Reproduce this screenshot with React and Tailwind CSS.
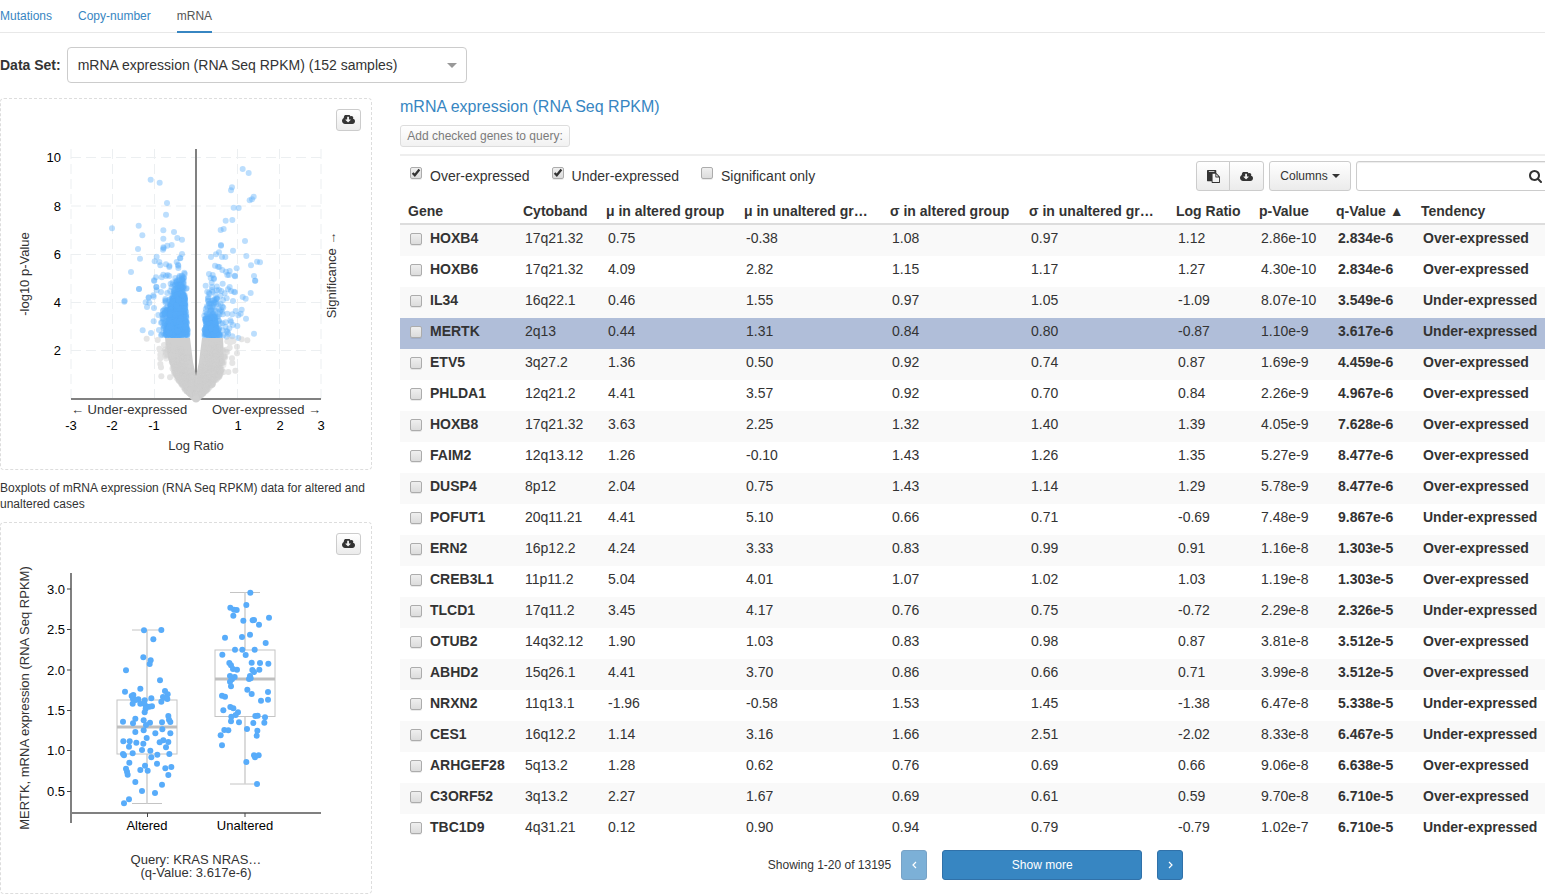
import React from "react";

const ALTERED = [
  [132, 61], [184, 60], [160, 88], [130, 142], [152, 151], [149, 162], [78, 181], [180, 211], [121, 236],
  [75, 245], [195, 243], [100, 255], [95, 258], [203, 253], [189, 261], [197, 263], [202, 267], [99, 267],
  [115, 268], [107, 270], [154, 265], [134, 271], [184, 275], [98, 281], [121, 281], [133, 281], [138, 289],
  [148, 290], [156, 289], [137, 296], [134, 307], [205, 318], [106, 326], [207, 329], [211, 336], [131, 331],
  [150, 338], [69, 335], [99, 340], [186, 337], [138, 345], [187, 358], [106, 366], [131, 361], [166, 370],
  [211, 370], [140, 384], [70, 394], [89, 394], [109, 398], [190, 391], [179, 397], [205, 396], [130, 401],
  [87, 410], [198, 412], [126, 420], [151, 422], [98, 430], [69, 432], [72, 436], [172, 434], [208, 432],
  [154, 442], [88, 458], [171, 461], [135, 467], [78, 476], [196, 475], [214, 471], [121, 480], [143, 482],
  [81, 485], [83, 494], [205, 495], [106, 516], [186, 524], [126, 543], [165, 549], [87, 568], [72, 580],
].map(([x, y]) => [100 + x / 3, 610 + y / 3]);

const UNALTERED = [
  [151, 68], [139, 105], [91, 113], [102, 119], [110, 120], [100, 137], [207, 143], [130, 152], [158, 151],
  [162, 150], [177, 164], [150, 194], [75, 203], [126, 201], [197, 219], [105, 239], [127, 239], [164, 239],
  [67, 254], [137, 255], [88, 279], [93, 286], [155, 278], [180, 279], [205, 281], [99, 297], [111, 299],
  [157, 300], [178, 299], [162, 306], [90, 318], [104, 321], [150, 318], [96, 328], [147, 327], [152, 325],
  [90, 335], [93, 349], [142, 359], [155, 372], [204, 366], [66, 377], [75, 380], [183, 392], [204, 389],
  [91, 411], [100, 415], [70, 421], [114, 427], [107, 435], [94, 440], [166, 438], [173, 437], [195, 442],
  [93, 454], [117, 457], [160, 459], [193, 458], [141, 477], [73, 480], [85, 481], [172, 482], [62, 496],
  [170, 497], [66, 526], [162, 556], [176, 556], [165, 562], [139, 576], [171, 642],
].map(([x, y]) => [200 + x / 3, 570 + y / 3]);

const SIGNIFICANT = [
  ...[
    [452, 119], [479, 128], [501, 189], [498, 224], [336, 265], [416, 257], [427, 286], [490, 271], [522, 276],
    [490, 296], [532, 294], [546, 299], [502, 317], [515, 315], [414, 327], [490, 322], [491, 325], [489, 329],
    [420, 356], [546, 342], [540, 354], [541, 355], [470, 350], [464, 364], [478, 366], [481, 376], [498, 373],
    [530, 366], [508, 377], [508, 381], [534, 374], [535, 377], [535, 384], [393, 396], [553, 398], [554, 402],
    [490, 404], [498, 408], [503, 405], [508, 408], [468, 412], [485, 412], [526, 414], [545, 407], [462, 421],
    [417, 447], [469, 441], [470, 451], [490, 437], [512, 431], [446, 472], [461, 470], [558, 446], [374, 482],
  ].map(([x, y]) => [x / 3, 140 + y / 3]),
  ...[
    [237, 27], [193, 65], [248, 151], [273, 159], [266, 53], [257, 67], [268, 68], [261, 81], [280, 46],
    [282, 84], [281, 124], [295, 105], [297, 150], [289, 21], [303, 36], [283, 3], [380, 25], [303, 128],
  ].map(([x, y]) => [60 + x / 3, 280 + y / 3]),
  ...[
    [158, 87], [176, 99], [126, 142], [123, 151], [191, 170], [186, 178], [179, 181], [131, 203], [146, 204],
    [107, 242], [127, 240], [92, 270], [101, 267], [165, 303], [93, 315], [93, 317], [129, 332], [87, 337],
    [78, 343], [63, 351], [96, 351], [106, 351], [169, 348], [201, 365], [210, 367], [183, 376], [140, 385],
    [75, 377], [84, 380], [88, 381], [97, 390], [108, 395], [119, 393], [112, 405], [117, 405], [134, 407],
    [135, 409], [57, 402], [68, 405], [62, 414], [71, 415], [72, 417], [192, 408], [196, 422], [47, 437],
    [65, 428], [66, 441], [98, 431], [66, 450], [68, 455], [57, 458], [80, 451], [94, 453], [104, 460],
    [119, 441], [114, 448], [123, 453], [132, 455], [135, 457], [182, 459], [158, 471], [167, 476], [81, 474],
  ].map(([x, y]) => [190 + x / 3, 140 + y / 3]),
  ...[
    [195, 2], [99, 60], [110, 55], [129, 63], [81, 58], [67, 62], [84, 72], [68, 85], [59, 93], [155, 89],
    [137, 93], [145, 106], [152, 101], [168, 116], [112, 101], [127, 103], [98, 103], [88, 104], [121, 121],
    [123, 126], [142, 138], [129, 135], [192, 161], [110, 153], [145, 174], [127, 169], [110, 170], [43, 107],
    [57, 71], [75, 90], [107, 127], [118, 145],
  ].map(([x, y]) => [190 + x / 3, 280 + y / 3]),
];

const INSIGNIFICANT = [
  ...[
    [260, 176], [293, 180], [300, 210], [301, 224], [298, 206], [301, 252], [303, 262], [304, 289],
    [301, 235], [330, 292], [312, 195], [308, 214],
  ].map(([x, y]) => [60 + x / 3, 280 + y / 3]),
  ...[
    [172, 181], [155, 178], [141, 200], [141, 220], [126, 235], [127, 249], [136, 272], [115, 276], [101, 276],
    [126, 180], [120, 188], [109, 209], [117, 180], [130, 184], [112, 184], [119, 203],
  ].map(([x, y]) => [190 + x / 3, 280 + y / 3]),
];

function makeRandom(seed) {
  let state = seed;
  return () => {
    state = (state * 1664525 + 1013904223) % 4294967296;
    return state / 4294967296;
  };
}

// Bands are [y, outerX, innerX]; points are spread evenly between neighbouring bands.
function cloud(bands, count, seed) {
  const random = makeRandom(seed);
  const points = [];
  const top = bands[0][0];
  const bottom = bands[bands.length - 1][0];
  for (let i = 0; i < count; i++) {
    const y = top + Math.sqrt(random()) * (bottom - top);
    let k = 0;
    while (k < bands.length - 2 && bands[k + 1][0] < y) k++;
    const [y0, a0, b0] = bands[k];
    const [y1, a1, b1] = bands[k + 1];
    const t = (y - y0) / (y1 - y0);
    const a = a0 + (a1 - a0) * t;
    const b = b0 + (b1 - b0) * t;
    points.push([a + (b - a) * random(), y]);
  }
  return points;
}

const BLUE_CLOUD = [
  ...cloud([[272, 179, 184], [290, 168, 184], [310, 162, 186], [336, 161, 188]], 240, 7),
  ...cloud([[274, 178, 184], [290, 174, 184], [305, 170, 186], [336, 166, 188]], 620, 19),
  ...cloud([[284, 206, 222], [312, 205, 224], [336, 205, 230]], 80, 5),
  ...cloud([[308, 206, 212], [317, 205, 216], [325, 205, 216], [336, 204, 221]], 210, 31),
];

const GRAY_CLOUD = [
  ...cloud([[341, 163, 188], [358, 166, 189], [378, 176, 193], [390, 185, 196], [398, 194, 197]], 400, 11),
  ...cloud([[341, 230, 204], [358, 226, 203], [376, 220, 199], [388, 210, 196], [398, 198, 195]], 400, 23),
];

function Points({ points, className, r = 3 }) {
  return (
    <g className={className}>
      {points.map(([x, y], i) => (
        <circle key={i} cx={x} cy={y} r={r} />
      ))}
    </g>
  );
}

function CloudDownloadIcon() {
  return (
    <svg viewBox="0 128 1920 1280" className="h-[9px] w-[13px] fill-current" preserveAspectRatio="none" aria-hidden="true">
      <path d="M1280 800q0-14-9-23t-23-9h-224v-352q0-13-9.5-22.5t-22.5-9.5h-192q-13 0-22.5 9.5t-9.5 22.5v352h-224q-13 0-22.5 9.5t-9.5 22.5q0 14 9 23l352 352q9 9 23 9t23-9l351-351q10-12 10-24zm640 224q0 159-112.5 271.5t-271.5 112.5h-1088q-185 0-316.5-131.5t-131.5-316.5q0-130 70-240t188-165q-2-30-2-43 0-212 150-362t362-150q156 0 285.5 87t188.5 231q71-62 166-62 106 0 181 75t75 181q0 76-41 138 130 31 213.5 135.5t83.5 238.5z" />
    </svg>
  );
}

function ClipboardIcon() {
  return (
    <svg viewBox="0 0 1792 1792" className="size-[13px] fill-current" aria-hidden="true">
      <path d="M768 1664h896v-640h-416q-40 0-68-28t-28-68v-416h-384v1152zm256-1440v-64q0-13-9.5-22.5t-22.5-9.5h-704q-13 0-22.5 9.5t-9.5 22.5v64q0 13 9.5 22.5t22.5 9.5h704q13 0 22.5-9.5t9.5-22.5zm256 672h299l-299-299v299zm512 128v672q0 40-28 68t-68 28h-960q-40 0-68-28t-28-68v-160h-544q-40 0-68-28t-28-68v-1344q0-40 28-68t68-28h1088q40 0 68 28t28 68v328q21 13 36 28l408 408q28 28 48 76t20 88z" />
    </svg>
  );
}

function SearchIcon() {
  return (
    <svg viewBox="64 128 1664 1664" className="size-[13px] fill-current" aria-hidden="true">
      <path d="M1216 832q0-185-131.5-316.5t-316.5-131.5-316.5 131.5-131.5 316.5 131.5 316.5 316.5 131.5 316.5-131.5 131.5-316.5zm512 832q0 52-38 90t-90 38q-54 0-90-38l-343-342q-179 124-399 124-143 0-273.5-55.5t-225-150-150-225-55.5-273.5 55.5-273.5 150-225 225-150 273.5-55.5 273.5 55.5 225 150 150 225 55.5 273.5q0 220-124 399l343 343q37 37 37 90z" />
    </svg>
  );
}

function Chevron({ points }) {
  return (
    <svg viewBox="0 0 5 8" className="h-2 w-[5px] fill-none stroke-current" aria-hidden="true">
      <polyline points={points} strokeWidth="1.2" />
    </svg>
  );
}

function Checkbox({ id, label, defaultChecked }) {
  return (
    <span className="relative block size-3 shrink-0">
      <input
        id={id}
        type="checkbox"
        aria-label={label}
        defaultChecked={defaultChecked}
        className="peer block size-3 appearance-none rounded-[2px] border border-[#acacac] bg-linear-to-b from-[#efefef] to-[#dcdcdc] shadow-[0_1px_0_rgba(0,0,0,0.08)]"
      />
      <svg
        viewBox="0 0 12 12"
        className="pointer-events-none absolute inset-0 hidden size-3 fill-none stroke-[#333] peer-checked:block"
        aria-hidden="true"
      >
        <path d="M2.6 6 L4.8 8.2 L9.4 2.6" strokeWidth="2.3" />
      </svg>
    </span>
  );
}

function DownloadButton() {
  return (
    <button
      type="button"
      aria-label="Download"
      className="absolute top-2.5 right-2.5 flex h-[22px] w-[25px] items-center justify-center rounded-[3px] border border-[#ccc] bg-linear-to-b from-white to-[#ebebeb] pb-px text-[#333]"
    >
      <CloudDownloadIcon />
    </button>
  );
}

const SIDE_TEXT = "fill-[#333]";

function VolcanoPlot() {
  return (
    <svg viewBox="1 99 370 370" className="block w-full text-[13px]" role="img" aria-label="Volcano plot">
      <g className="fill-none stroke-[#eceff1]" strokeWidth="1" strokeDasharray="10 5">
        {[71, 112.5, 154.5, 237.5, 279.5, 321].map((x) => (
          <line key={x} x1={x} x2={x} y1="399" y2="149" />
        ))}
        {[157.5, 206, 254.5, 302.5, 350.5].map((y) => (
          <line key={y} x1="71" x2="321" y1={y} y2={y} />
        ))}
      </g>
      <g className="stroke-[#808080]" strokeWidth="2">
        <line x1="71" x2="321" y1="399" y2="399" />
        <line x1="196" x2="196" y1="149" y2="399" />
      </g>
      <Points points={SIGNIFICANT} className="fill-[#58acfa] [fill-opacity:0.4]" />
      <Points points={BLUE_CLOUD} className="fill-[#58acfa] [fill-opacity:0.4]" />
      <Points points={INSIGNIFICANT} className="fill-[#ccc] opacity-50" />
      <polygon
        className="fill-[#d0d0d0]"
        points="165,338 190,338 193,362 196,376 199,362 202,338 223,338 224,358 220,374 211,386 199,400 193,400 184,390 174,376 168,358"
      />
      <Points points={GRAY_CLOUD} className="fill-[#cfcfcf] [fill-opacity:0.4]" />
      <circle cx="196" cy="399" r="3.5" className="fill-[#d0d0d0]" />
      <g className="fill-black" textAnchor="end">
        <text x="61" y="162">10</text>
        <text x="61" y="211">8</text>
        <text x="61" y="259">6</text>
        <text x="61" y="307">4</text>
        <text x="61" y="355">2</text>
      </g>
      <g className="fill-black" textAnchor="middle">
        <text x="71" y="430">-3</text>
        <text x="112" y="430">-2</text>
        <text x="154" y="430">-1</text>
        <text x="238" y="430">1</text>
        <text x="280" y="430">2</text>
        <text x="321" y="430">3</text>
      </g>
      <g className={SIDE_TEXT}>
        <text x="71" y="414">← Under-expressed</text>
        <text x="321" y="414" textAnchor="end">Over-expressed →</text>
        <text x="196" y="450" textAnchor="middle">Log Ratio</text>
        <text transform="translate(29 274) rotate(-90)" textAnchor="middle">-log10 p-Value</text>
        <text transform="translate(336 275) rotate(-90)" textAnchor="middle">Significance →</text>
      </g>
    </svg>
  );
}

function Box({ x, top, q3, median, q1, bottom }) {
  return (
    <g className="fill-none stroke-[#c4c4c4]" strokeWidth="1">
      <path d={`M${x - 15} ${top}H${x + 15}M${x - 15} ${bottom}H${x + 15}`} />
      <path className="stroke-[#d2d2d2]" strokeWidth="1.6" d={`M${x} ${top}V${q3}M${x} ${q1}V${bottom}`} />
      <rect x={x - 30} y={q3} width="60" height={q1 - q3} />
      <path className="stroke-[#bfbfbf]" strokeWidth="3" d={`M${x - 30} ${median}H${x + 30}`} />
    </g>
  );
}

function BoxPlot() {
  return (
    <svg viewBox="1 523 370 370" className="block w-full text-[13px]" role="img" aria-label="MERTK boxplots">
      <g className="stroke-[#808080]" strokeWidth="2">
        <line x1="71" x2="71" y1="573" y2="823" />
        <line x1="71" x2="321" y1="813" y2="813" />
      </g>
      <path
        className="stroke-[#444]"
        strokeWidth="1"
        d="M67 589H71M67 629.5H71M67 670H71M67 710.5H71M67 750.5H71M67 791.5H71M147.5 813V817M245 813V817"
      />
      <Box x={147} top={630} q3={700} median={727} q1={754} bottom={803.5} />
      <Box x={245} top={592.5} q3={650} median={679} q1={716.5} bottom={784} />
      <Points points={ALTERED} className="fill-[#58acfa]" />
      <Points points={UNALTERED} className="fill-[#58acfa]" />
      <g className="fill-black" textAnchor="end">
        <text x="65" y="594">3.0</text>
        <text x="65" y="634">2.5</text>
        <text x="65" y="675">2.0</text>
        <text x="65" y="715">1.5</text>
        <text x="65" y="755">1.0</text>
        <text x="65" y="796">0.5</text>
      </g>
      <g className="fill-black" textAnchor="middle">
        <text x="147" y="830">Altered</text>
        <text x="245" y="830">Unaltered</text>
      </g>
      <g className={SIDE_TEXT} textAnchor="middle">
        <text x="196" y="864">Query: KRAS NRAS…</text>
        <text x="196" y="877">(q-Value: 3.617e-6)</text>
        <text transform="translate(29 698) rotate(-90)">MERTK, mRNA expression (RNA Seq RPKM)</text>
      </g>
    </svg>
  );
}

const HEADERS = [
  "Gene", "Cytoband", "μ in altered group", "μ in unaltered group", "σ in altered group",
  "σ in unaltered group", "Log Ratio", "p-Value", "q-Value ▲", "Tendency",
];

const ROWS = [
  ["HOXB4", "17q21.32", "0.75", "-0.38", "1.08", "0.97", "1.12", "2.86e-10", "2.834e-6", "Over-expressed"],
  ["HOXB6", "17q21.32", "4.09", "2.82", "1.15", "1.17", "1.27", "4.30e-10", "2.834e-6", "Over-expressed"],
  ["IL34", "16q22.1", "0.46", "1.55", "0.97", "1.05", "-1.09", "8.07e-10", "3.549e-6", "Under-expressed"],
  ["MERTK", "2q13", "0.44", "1.31", "0.84", "0.80", "-0.87", "1.10e-9", "3.617e-6", "Under-expressed"],
  ["ETV5", "3q27.2", "1.36", "0.50", "0.92", "0.74", "0.87", "1.69e-9", "4.459e-6", "Over-expressed"],
  ["PHLDA1", "12q21.2", "4.41", "3.57", "0.92", "0.70", "0.84", "2.26e-9", "4.967e-6", "Over-expressed"],
  ["HOXB8", "17q21.32", "3.63", "2.25", "1.32", "1.40", "1.39", "4.05e-9", "7.628e-6", "Over-expressed"],
  ["FAIM2", "12q13.12", "1.26", "-0.10", "1.43", "1.26", "1.35", "5.27e-9", "8.477e-6", "Over-expressed"],
  ["DUSP4", "8p12", "2.04", "0.75", "1.43", "1.14", "1.29", "5.78e-9", "8.477e-6", "Over-expressed"],
  ["POFUT1", "20q11.21", "4.41", "5.10", "0.66", "0.71", "-0.69", "7.48e-9", "9.867e-6", "Under-expressed"],
  ["ERN2", "16p12.2", "4.24", "3.33", "0.83", "0.99", "0.91", "1.16e-8", "1.303e-5", "Over-expressed"],
  ["CREB3L1", "11p11.2", "5.04", "4.01", "1.07", "1.02", "1.03", "1.19e-8", "1.303e-5", "Over-expressed"],
  ["TLCD1", "17q11.2", "3.45", "4.17", "0.76", "0.75", "-0.72", "2.29e-8", "2.326e-5", "Under-expressed"],
  ["OTUB2", "14q32.12", "1.90", "1.03", "0.83", "0.98", "0.87", "3.81e-8", "3.512e-5", "Over-expressed"],
  ["ABHD2", "15q26.1", "4.41", "3.70", "0.86", "0.66", "0.71", "3.99e-8", "3.512e-5", "Over-expressed"],
  ["NRXN2", "11q13.1", "-1.96", "-0.58", "1.53", "1.45", "-1.38", "6.47e-8", "5.338e-5", "Under-expressed"],
  ["CES1", "16q12.2", "1.14", "3.16", "1.66", "2.51", "-2.02", "8.33e-8", "6.467e-5", "Under-expressed"],
  ["ARHGEF28", "5q13.2", "1.28", "0.62", "0.76", "0.69", "0.66", "9.06e-8", "6.638e-5", "Over-expressed"],
  ["C3ORF52", "3q13.2", "2.27", "1.67", "0.69", "0.61", "0.59", "9.70e-8", "6.710e-5", "Over-expressed"],
  ["TBC1D9", "4q31.21", "0.12", "0.90", "0.94", "0.79", "-0.79", "1.02e-7", "6.710e-5", "Under-expressed"],
];

function GeneTable() {
  return (
    <table className="w-full table-fixed border-collapse text-sm leading-5">
      <colgroup>
        <col className="w-[115px]" />
        <col className="w-[83px]" />
        <col className="w-[138px]" />
        <col className="w-[146px]" />
        <col className="w-[139px]" />
        <col className="w-[147px]" />
        <col className="w-[83px]" />
        <col className="w-[77px]" />
        <col className="w-[85px]" />
        <col />
      </colgroup>
      <thead>
        <tr className="text-left">
          {HEADERS.map((header) => (
            <th key={header} className="truncate px-2 pt-2.5 pb-1 font-bold shadow-[inset_0_-2px_0_#ddd]">
              {header}
            </th>
          ))}
        </tr>
      </thead>
      <tbody>
        {ROWS.map(([gene, ...values]) => (
          <tr
            key={gene}
            className={gene === "MERTK" ? "h-[31px] bg-[#b0bed9]" : "h-[31px] odd:bg-[#f9f9f9]"}
          >
            <td className="pt-[3px] pb-2 pl-2.5 font-bold">
              <label className="flex items-start gap-2">
                <span className="pt-[5px]">
                  <Checkbox label={gene} />
                </span>
                {gene}
              </label>
            </td>
            {values.map((value, i) => (
              <td key={i} className={i > 6 ? "pt-[3px] pb-2 pl-2.5 font-bold" : "pt-[3px] pb-2 pl-2.5"}>
                {value}
              </td>
            ))}
          </tr>
        ))}
      </tbody>
    </table>
  );
}

function Filter({ id, label, defaultChecked }) {
  return (
    <div className="flex items-start gap-2">
      <span className="pt-px">
        <Checkbox id={id} defaultChecked={defaultChecked} />
      </span>
      <label htmlFor={id} className="text-sm leading-5">
        {label}
      </label>
    </div>
  );
}

const TOOL_BUTTON =
  "flex h-[30px] items-center justify-center border border-[#ccc] bg-linear-to-b from-white to-[#ebebeb] text-xs text-[#333]";
const PAGE_BUTTON =
  "flex h-[30px] items-center justify-center rounded-[3px] border border-[#3071a9] bg-[#3786c2] text-xs text-white";

export default function App() {
  return (
    <div className="overflow-hidden bg-white font-['Liberation_Sans',Arial,sans-serif] text-sm text-[#333]">
      <nav className="flex h-[33px] gap-[26px] border-b border-[#e8e8e8] text-xs">
        <a href="#mutations" className="pt-2 text-[#3786c2]">Mutations</a>
        <a href="#copy-number" className="pt-2 text-[#3786c2]">Copy-number</a>
        <a href="#mrna" className="h-[33px] border-b-2 border-[#3786c2] pt-2 text-[#555]">mRNA</a>
      </nav>

      <div className="mt-3.5 flex items-center gap-1.5">
        <label htmlFor="data-set" className="font-bold">Data Set:</label>
        <div className="relative w-[400px]">
          <select
            id="data-set"
            className="block h-9 w-full appearance-none rounded border border-[#ccc] bg-white px-2.5 text-sm text-[#333]"
          >
            <option>mRNA expression (RNA Seq RPKM) (152 samples)</option>
          </select>
          <svg
            viewBox="0 0 10 5"
            className="pointer-events-none absolute top-4 right-2.5 h-[5px] w-2.5 fill-[#999]"
            aria-hidden="true"
          >
            <polygon points="0,0 10,0 5,5" />
          </svg>
        </div>
      </div>

      <div className="mt-[15px] flex items-start gap-7">
        <div className="w-[372px] shrink-0">
          <div className="relative rounded border border-dashed border-[#ddd]">
            <VolcanoPlot />
            <DownloadButton />
          </div>
          <p className="my-2.5 text-xs leading-4">
            Boxplots of mRNA expression (RNA Seq RPKM) data for altered and unaltered cases
          </p>
          <div className="relative rounded border border-dashed border-[#ddd]">
            <BoxPlot />
            <DownloadButton />
          </div>
        </div>

        <main className="-mr-1.5 min-w-0 flex-1">
          <h2 className="text-base leading-[18px] text-[#3786c2]">mRNA expression (RNA Seq RPKM)</h2>
          <button
            type="button"
            disabled
            className="mt-[9px] flex h-[22px] w-[170px] items-center justify-center rounded-[3px] border border-[#ccc] bg-linear-to-b from-white to-[#ebebeb] text-xs text-[#333] opacity-65"
          >
            Add checked genes to query:
          </button>
          <div className="mt-[7px] flex items-start justify-between border-t-2 border-[#eee] pt-[5px]">
            <div className="flex gap-[22px] pt-[5px] pl-2.5">
              <Filter id="over" label="Over-expressed" defaultChecked />
              <Filter id="under" label="Under-expressed" defaultChecked />
              <Filter id="significant" label="Significant only" />
            </div>
            <div className="flex gap-[5px]">
              <div className="flex">
                <button type="button" aria-label="Copy" className={`${TOOL_BUTTON} w-[34px] rounded-l-[3px]`}>
                  <ClipboardIcon />
                </button>
                <button
                  type="button"
                  aria-label="Download"
                  className={`${TOOL_BUTTON} -ml-px w-[35px] rounded-r-[3px]`}
                >
                  <CloudDownloadIcon />
                </button>
              </div>
              <button type="button" className={`${TOOL_BUTTON} w-[82px] gap-1 rounded-[3px]`}>
                Columns
                <svg viewBox="0 0 8 4" className="h-1 w-2 fill-current" aria-hidden="true">
                  <polygon points="0,0 8,0 4,4" />
                </svg>
              </button>
              <div className="relative w-[195px]">
                <input
                  type="text"
                  aria-label="Search"
                  className="block h-[30px] w-full rounded-[3px] border border-[#ccc] bg-white px-2.5 text-xs shadow-[inset_0_1px_1px_rgba(0,0,0,0.075)]"
                />
                <span className="pointer-events-none absolute top-[9px] right-[9px]">
                  <SearchIcon />
                </span>
              </div>
            </div>
          </div>
          <GeneTable />
          <div className="mt-[5px] flex items-center justify-center gap-[15px] text-xs">
            <div className="flex items-center gap-2.5">
              <span>Showing 1-20 of 13195</span>
              <button type="button" aria-label="Previous page" disabled className={`${PAGE_BUTTON} w-[26px] opacity-65`}>
                <Chevron points="4,1 1,4 4,7" />
              </button>
            </div>
            <button type="button" className={`${PAGE_BUTTON} w-[200px]`}>Show more</button>
            <button type="button" aria-label="Next page" className={`${PAGE_BUTTON} w-[26px]`}>
              <Chevron points="1,1 4,4 1,7" />
            </button>
          </div>
        </main>
      </div>
    </div>
  );
}
